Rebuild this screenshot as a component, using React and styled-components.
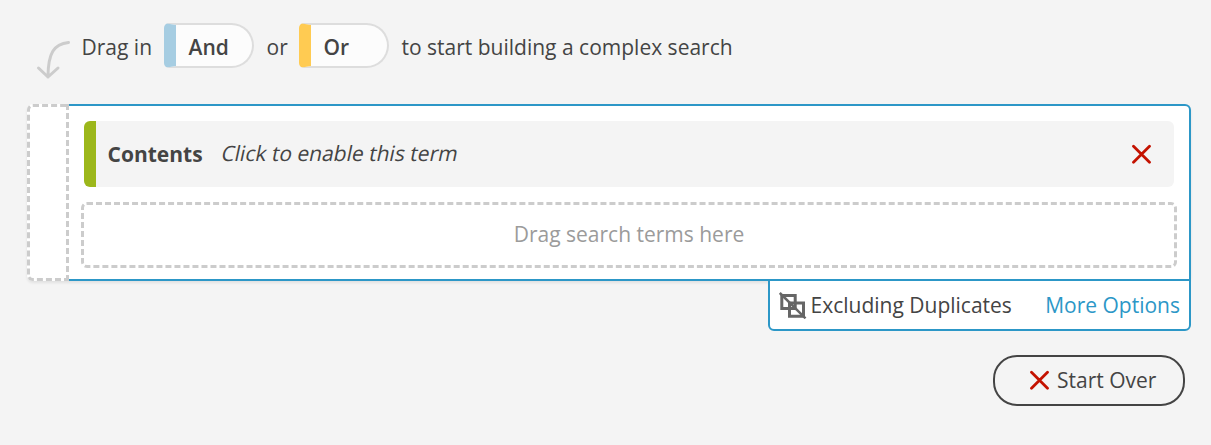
import React from 'react';
import styled, { createGlobalStyle } from 'styled-components';

const GlobalStyle = createGlobalStyle`
  * { box-sizing: border-box; }
  body {
    margin: 0;
    background: #f4f4f4;
    color: #444;
    font-family: "Open Sans", sans-serif;
    font-size: 21px;
    line-height: 30px;
  }
`;

const Page = styled.main`
  width: 1211px;
  height: 445px;
  padding: 23px 20px 0 27px;
  display: flex;
  flex-direction: column;
  background: #f4f4f4;
  overflow: hidden;
`;

const Hint = styled.div`
  height: 81px;
  display: flex;
  align-items: flex-start;
`;

const Arrow = styled.svg`
  width: 36px;
  height: 40px;
  margin: 17px 9.5px 0 9px;
  flex: none;
`;

const HintText = styled.span`
  width: ${({ $width }) => $width}px;
  padding-top: 9px;
  flex: none;
  white-space: nowrap;
`;

const Pill = styled.div`
  width: 90px;
  height: 45px;
  flex: none;
  margin-right: 12.5px;
  display: flex;
  align-items: center;
  border: 2px solid #ddd;
  border-left: 12px solid ${({ $color }) => $color};
  border-radius: 5px 23px 23px 5px;
  background: #fcfcfc;
  padding: 3px 0 0 12.5px;
  font-weight: 600;
`;

const Builder = styled.section`
  height: 177px;
  display: flex;
  border-radius: 6px;
  box-shadow: 0 2px 3px rgba(0, 0, 0, 0.08);
`;

const Gutter = styled.div`
  width: 42px;
  flex: none;
  border: 3px dashed #ccc;
  border-radius: 6px 0 0 6px;
  background: #fff;
`;

const Panel = styled.div`
  flex: 1;
  padding: 15px 12px 11px;
  border: solid #2c97c7;
  border-width: 2px 2px 2px 0;
  border-radius: 0 6px 0 0;
  background: #fff;
`;

const Term = styled.div`
  height: 66px;
  margin: 0 3px 15px;
  padding: 0 22px 0 11.5px;
  display: flex;
  align-items: center;
  border-left: 12px solid #9cb71b;
  border-radius: 6px;
  background: #f4f4f4;
`;

const TermName = styled.strong`
  width: 114.5px;
  font-weight: 700;
`;

const TermHint = styled.span`
  flex: 1;
  padding-bottom: 2px;
`;

const Slanted = styled.span`
  display: inline-block;
  transform: skewX(-12deg);
`;

const Cross = styled.svg`
  width: 20px;
  height: 20px;
  flex: none;
`;

const DropZone = styled.div`
  height: 66px;
  padding-bottom: 2px;
  display: flex;
  align-items: center;
  justify-content: center;
  border: 3px dashed #ccc;
  border-radius: 6px;
  color: #9b9b9b;
`;

const Options = styled.div`
  position: relative;
  width: 423px;
  height: 52px;
  margin-top: -2px;
  padding: 0 9px 0 9px;
  align-self: flex-end;
  display: flex;
  align-items: center;
  border: 2px solid #2c97c7;
  border-radius: 0 0 6px 6px;
  background: #fff;
`;

const DuplicateIcon = styled.svg`
  width: 28px;
  height: 28px;
  margin-right: 3.5px;
  flex: none;
`;

const OptionLabel = styled.span`
  flex: 1;
  white-space: nowrap;
`;

const MoreLink = styled.a`
  color: #2c97c7;
  white-space: nowrap;
`;

const StartOver = styled.button`
  width: 192px;
  height: 51px;
  margin: 24px 6px 0 0;
  padding: 0 27px 1px 35px;
  align-self: flex-end;
  display: flex;
  align-items: center;
  gap: 7px;
  border: 2px solid #444;
  border-radius: 24px;
  background: transparent;
  color: #444;
  font: inherit;
  white-space: nowrap;
`;

function RedCross() {
  return (
    <Cross viewBox="0 0 20 20" fill="none" stroke="#c41200" strokeWidth="2.8" strokeLinecap="round">
      <path d="M1.5 2.3 17.5 18.3M17.5 2.3 1.5 18.3" />
    </Cross>
  );
}

export default function App() {
  return (
    <>
      <GlobalStyle />
      <Page>
        <Hint>
          <Arrow viewBox="0 0 36 40" fill="none" stroke="#ccc" strokeWidth="3" strokeLinecap="round" strokeLinejoin="round">
            <path d="M32.5 2.5C18 4 12 13 12 37M2.5 28 12 37 22 28" />
          </Arrow>
          <HintText $width={82.5}>Drag in</HintText>
          <Pill $color="#a6cde2">And</Pill>
          <HintText $width={32.5}>or</HintText>
          <Pill $color="#ffcb52">Or</Pill>
          <HintText $width={340}>to start building a complex search</HintText>
        </Hint>
        <Builder>
          <Gutter />
          <Panel>
            <Term>
              <TermName>Contents</TermName>
              <TermHint><Slanted>Click to enable this term</Slanted></TermHint>
              <RedCross />
            </Term>
            <DropZone>Drag search terms here</DropZone>
          </Panel>
        </Builder>
        <Options>
          <DuplicateIcon viewBox="0 0 28 28" fill="none" stroke="#666" strokeWidth="3">
            <path d="M2.8 4.5H16.2V17.5H2.8ZM10.5 12H24.5V25.3H10.5Z" />
            <path d="M.8 2 26.5 27.3" strokeWidth="2.5" />
          </DuplicateIcon>
          <OptionLabel>Excluding Duplicates</OptionLabel>
          <MoreLink>More Options</MoreLink>
        </Options>
        <StartOver><RedCross />Start Over</StartOver>
      </Page>
    </>
  );
}
